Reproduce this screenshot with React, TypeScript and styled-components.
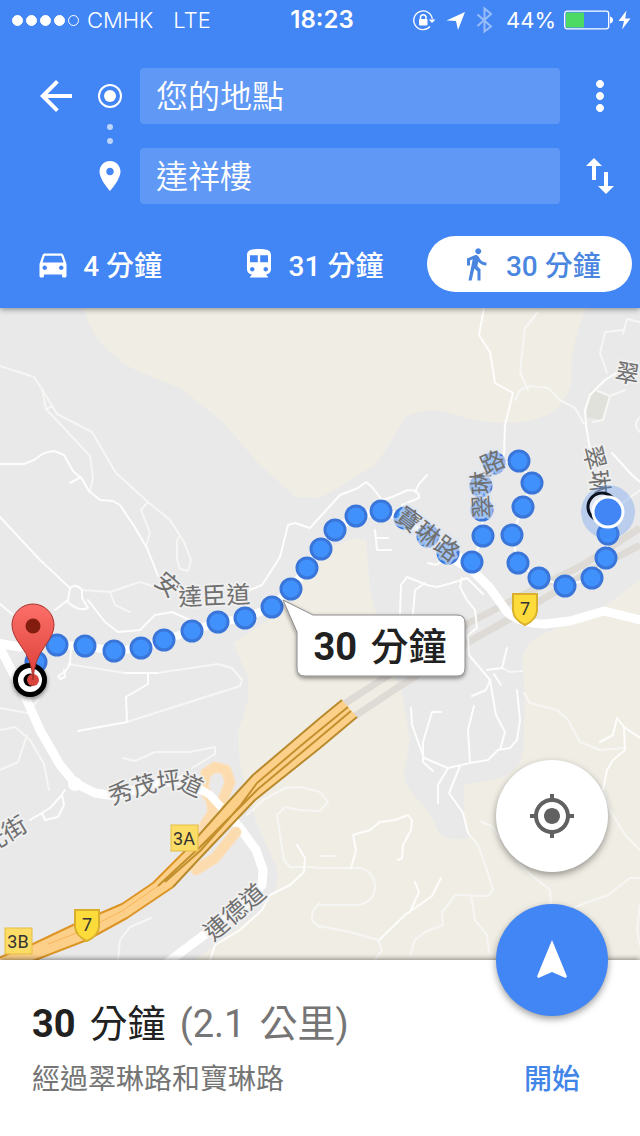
import React from 'react';
import styled, { createGlobalStyle, css } from 'styled-components';

const GlobalStyle = createGlobalStyle`
  *, *::before, *::after { box-sizing: border-box; }
  body {
    margin: 0;
    background: #fff;
    font-family: Roboto, 'Noto Sans CJK TC', sans-serif;
  }
  button, input { font-family: inherit; }
`;

const Page = styled.div`
  display: flex;
  flex-direction: column;
  min-height: 100vh;
`;

const Header = styled.header`
  position: relative;
  z-index: 2;
  background: #4285f4;
  color: #fff;
  box-shadow: 0 1px 6px rgba(0, 0, 0, 0.45);
`;

const StatusBar = styled.div`
  display: grid;
  grid-template-columns: 1fr auto 1fr;
  align-items: center;
  height: 40px;
  padding: 0 8px 0 12px;
  font-family: Inter, sans-serif;
  font-size: 22px;
  line-height: 40px;
`;

const Carrier = styled.div`
  display: flex;
  align-items: center;
  gap: 20px;
  font-weight: 300;
`;

const Signal = styled.span`
  display: flex;
  gap: 3px;
  margin-right: -12px;
`;

const SignalDot = styled.span<{ $on: boolean }>`
  width: 11px;
  height: 11px;
  border: 1px solid #fff;
  border-radius: 50%;
  background: ${p => (p.$on ? '#fff' : 'transparent')};
`;

const Clock = styled.time`
  font-size: 24px;
  font-weight: 600;
`;

const Indicators = styled.div`
  display: flex;
  align-items: center;
  justify-content: flex-end;
  gap: 8px;
  svg { display: block; flex: none; }
`;

const Power = styled.span`
  display: flex;
  align-items: center;
  gap: 4px;
`;

const RouteForm = styled.form`
  display: grid;
  grid-template-columns: 48px 36px 1fr 52px;
  grid-template-rows: 56px 24px 56px;
  column-gap: 12px;
  align-items: center;
  margin: 0;
  padding: 28px 16px 32px 32px;
`;

const IconButton = styled.button<{ $column: number; $row: number }>`
  grid-column: ${p => p.$column};
  grid-row: ${p => p.$row};
  justify-self: end;
  width: 48px;
  height: 48px;
  padding: 0;
  border: 0;
  background: none;
  color: #fff;
  svg { display: block; }
`;

const Marker = styled.span<{ $row: number }>`
  grid-column: 2;
  grid-row: ${p => p.$row};
  svg { display: block; }
`;

const Trail = styled.span`
  grid-column: 2;
  grid-row: 2;
  display: flex;
  flex-direction: column;
  align-items: center;
  gap: 8px;
  padding-bottom: 4px;
  &::before, &::after {
    content: '';
    width: 6px;
    height: 6px;
    border-radius: 50%;
    background: rgba(255, 255, 255, 0.65);
  }
`;

const PlaceInput = styled.input<{ $row: number }>`
  grid-column: 3;
  grid-row: ${p => p.$row};
  width: 100%;
  height: 56px;
  padding: 0 16px 5px;
  border: 0;
  border-radius: 4px;
  outline: none;
  background: rgba(255, 255, 255, 0.16);
  color: #fff;
  font-size: 32px;
  font-weight: 350;
`;

const Modes = styled.nav`
  display: grid;
  grid-template-columns: repeat(3, 1fr);
  gap: 8px;
  padding: 0 8px 16px 0;
`;

const Mode = styled.button<{ $active?: boolean }>`
  display: flex;
  align-items: center;
  justify-content: center;
  gap: 12px;
  height: 56px;
  padding: 0 8px 0 0;
  border: 0;
  border-radius: 28px;
  background: none;
  color: #fff;
  font-size: 28px;
  font-weight: 500;
  white-space: nowrap;
  svg { display: block; }
  ${p =>
    p.$active &&
    css`
      padding: 0;
      background: #fff;
      color: #4a86e0;
    `}
`;

const MapArea = styled.main`
  position: relative;
  flex: 1 1 0;
  min-height: 400px;
  background: #e9e9e9;
`;

const MapDrawing = styled.svg`
  position: absolute;
  inset: 0;
  width: 100%;
  height: 100%;
`;

const FabStack = styled.div`
  position: absolute;
  right: 32px;
  bottom: -56px;
  z-index: 3;
  display: flex;
  flex-direction: column;
  gap: 32px;
`;

const Fab = styled.button<{ $primary?: boolean }>`
  display: flex;
  align-items: center;
  justify-content: center;
  width: 112px;
  height: 112px;
  padding: 0;
  border: 0;
  border-radius: 50%;
  background: ${p => (p.$primary ? '#4285f4' : '#fff')};
  color: ${p => (p.$primary ? '#fff' : '#616161')};
  box-shadow: 0 3px 7px rgba(0, 0, 0, 0.38);
`;

const Summary = styled.section`
  position: relative;
  display: flex;
  align-items: flex-end;
  justify-content: space-between;
  padding: 32px;
  background: #fff;
  box-shadow: 0 -1px 5px rgba(0, 0, 0, 0.45);
`;

const Title = styled.h1`
  display: flex;
  gap: 14px;
  margin: 0;
  color: #212121;
  font-size: 38px;
  font-weight: 400;
  line-height: 64px;
  b { font-weight: 700; }
`;

const Distance = styled.span`
  display: flex;
  gap: 14px;
  color: #757575;
`;

const Via = styled.p`
  margin: 0;
  color: #757575;
  font-size: 28px;
  line-height: 48px;
`;

const StartButton = styled.button`
  width: 112px;
  height: 48px;
  padding: 0;
  border: 0;
  background: none;
  color: #4285e8;
  font-size: 28px;
  font-weight: 500;
  line-height: 48px;
`;

const RoadLabel = styled.text`
  fill: #707070;
  stroke: #f1f1f1;
  stroke-width: 4px;
  stroke-opacity: 0.85;
  stroke-linejoin: round;
  paint-order: stroke;
  font-size: 24px;
`;

const RouteLabel = styled(RoadLabel)`
  stroke: #dfe6f2;
  stroke-width: 5px;
  stroke-opacity: 0.6;
`;

const TagText = styled.text`
  fill: #333;
  font-size: 18px;
  text-anchor: middle;
`;

const CalloutText = styled.text`
  fill: #212121;
  font-size: 38px;
  font-weight: 700;
  text-anchor: middle;
`;

type IconProps = { d: string; size: number };

const Icon = ({ d, size }: IconProps) => (
  <svg width={size} height={size} viewBox="0 0 24 24" fill="currentColor" aria-hidden="true">
    <path d={d} />
  </svg>
);

const icons = {
  back: 'M20 11H7.83l5.59-5.59L12 4l-8 8 8 8 1.41-1.41L7.83 13H20v-2z',
  more: 'M12 8c1.1 0 2-.9 2-2s-.9-2-2-2-2 .9-2 2 .9 2 2 2zm0 2c-1.1 0-2 .9-2 2s.9 2 2 2 2-.9 2-2-.9-2-2-2zm0 6c-1.1 0-2 .9-2 2s.9 2 2 2 2-.9 2-2-.9-2-2-2z',
  swap: 'M16 17.01V10h-2v7.01h-3L15 21l4-3.99h-3zM9 3L5 6.99h3V14h2V6.99h3L9 3z',
  place: 'M12 2C8.13 2 5 5.13 5 9c0 5.25 7 13 7 13s7-7.75 7-13c0-3.87-3.13-7-7-7zm0 9.5c-1.38 0-2.5-1.12-2.5-2.5s1.12-2.5 2.5-2.5 2.5 1.12 2.5 2.5-1.12 2.5-2.5 2.5z',
  car: 'M18.92 6.01C18.72 5.42 18.16 5 17.5 5h-11c-.66 0-1.21.42-1.42 1.01L3 12v8c0 .55.45 1 1 1h1c.55 0 1-.45 1-1v-1h12v1c0 .55.45 1 1 1h1c.55 0 1-.45 1-1v-8l-2.08-5.99zM6.5 16c-.83 0-1.5-.67-1.5-1.5S5.67 13 6.5 13s1.5.67 1.5 1.5S7.33 16 6.5 16zm11 0c-.83 0-1.5-.67-1.5-1.5s.67-1.5 1.5-1.5 1.5.67 1.5 1.5-.67 1.5-1.5 1.5zM5 11l1.5-4.5h11L19 11H5z',
  train: 'M12 2c-4.42 0-8 .5-8 4v9.5C4 17.43 5.57 19 7.5 19L6 20.5v.5h12v-.5L16.5 19c1.93 0 3.5-1.57 3.5-3.5V6c0-3.5-3.58-4-8-4zM7.5 17c-.83 0-1.5-.67-1.5-1.5S6.67 14 7.500 14s1.500.67 1.500 1.500S8.330 17 7.500 17zm3.700-6.200H6V6.200h5.200v4.600zm5.300 6.200c-.83 0-1.500-.67-1.500-1.500s.67-1.500 1.500-1.500 1.500.67 1.500 1.500-.67 1.500-1.500 1.500zm1.500-6.200h-5.200V6.200H18v4.600z',
  walk: 'M13.500 5.500c1.100 0 2-.9 2-2s-.9-2-2-2-2 .9-2 2 .9 2 2 2zM9.800 8.900L7 23h2.100l1.800-8 2.100 2v6h2v-7.500l-2.100-2 .6-3C14.800 12 16.800 13 19 13v-2c-1.900 0-3.500-1-4.300-2.400l-1-1.600c-.4-.6-1-1-1.700-1-.3 0-.5.1-.8.1L6 8.300V13h2V9.600l1.800-.7',
  locate: 'M12 8c-2.21 0-4 1.79-4 4s1.79 4 4 4 4-1.79 4-4-1.79-4-4-4zm8.94 3c-.46-4.17-3.77-7.48-7.94-7.94V1h-2v2.06C6.83 3.52 3.52 6.83 3.06 11H1v2h2.06c.46 4.17 3.77 7.48 7.94 7.94V23h2v-2.06c4.17-.46 7.48-3.77 7.94-7.94H23v-2h-2.06zM12 19c-3.87 0-7-3.13-7-7s3.13-7 7-7 7 3.13 7 7-3.13 7-7 7z',
  navigate: 'M12 2L4.5 20.29l.71.71L12 18l6.79 3 .71-.71z',
};

const OpenGround = () => (
  <g fill="#f0ede4">
    <path d="M83 300 L86 315 Q92 335 105 347 Q125 368 150 376 L180 388 L222 421 L260 465 L296 497 L320 498 L375 465 Q390 445 405 417 Q430 405 455 415 Q485 424 515 423 Q540 421 555 410 Q575 390 571 370 Q573 335 590 300Z" />
    <path d="M283 610 L320 552 L355 538 L366 540 L370 590 L383 640 L402 693 L410 740 L404 775 Q406 790 422 804 Q432 815 440 835 Q452 842 469 838 L464 820 L464 785 L500 778 Q520 770 523 752 L525 700 L522 660 Q524 642 545 633 L600 610 L640 580 V960 H195 L217 943 L262 910 Q282 885 277 868 L256 822 L240 765 L238 733 L248 700 L248 677 L233 643Z" />
  </g>
);

const routeDots: [number, number][] = [
  [36, 662], [57, 645], [85, 646], [114, 651], [141, 648], [164, 640], [192, 631],
  [218, 622], [245, 618], [272, 607], [291, 589], [307, 568], [321, 549], [335, 530],
  [356, 516], [381, 511], [405, 518], [428, 536], [448, 553], [472, 562], [483, 536],
  [482, 510], [481, 486], [494, 463], [519, 461], [532, 483], [523, 507], [512, 535],
  [518, 563], [539, 578], [565, 586], [592, 578], [606, 558], [608, 534],
];

const Roads = () => (
  <g fill="none" strokeLinejoin="round" strokeLinecap="round">
    <g stroke="#dedbd6" strokeWidth="7" strokeLinecap="butt">
      <path d="M344 704 L395 671 L467 624 L507 603 L583 565 L640 528" />
      <path d="M355 716 L400 686 L472 640 L520 613 L587 573 L640 545" />
    </g>
    <path
      stroke="#f6f6f4"
      strokeWidth="2"
      d="M0 366 L34 377 L42 389 L57 414 L92 432 L116 473 L148 502 L170 520 L184 542 L191 560 L188 571 L180 569 L177 560 L177 540 L180 536 M42 389 L46 409 L90 456 L93 478 L90 491 M46 409 L53 406 M148 502 L141 510 L150 533 L146 546
      M538 312 L525 328 L520 372 L528 390 M515 400 L520 390 L530 386 L548 388 L560 400 L575 408 L584 424 M640 322 L627 319 L623 334 M623 330 L605 332 L600 353 L607 373 M610 396 L603 420 L593 422 M598 391 L610 396 L625 390 M640 417 Q634 422 637 429 L642 434 M640 490 L620 505
      M524 693 L530 703 L557 710 L568 720 L580 742 L600 750 L625 748 M481 822 L492 826 L505 845 L525 870 L550 890 L551 905 M575 907 L608 895 L630 878 L640 878 M603 790 L610 810 L625 835 L640 850 M640 905 L637 930 L640 945
      M468 833 L478 845 L487 870 L493 890 L488 896 L455 895 L448 905 L442 912 L443 925 L425 932 L415 940 L410 955 M471 895 L475 920 L487 935 L489 952
      M320 868 L360 868 Q375 872 375 887 Q375 900 360 905 L320 905 M320 856 H335 M320 926 L350 932 L378 940 L382 950 L375 960
      M247 815 L263 800 L285 788 L300 787 L320 792 L328 802 L320 811 L300 810 L285 807 L277 815 L284 860 L290 867 L310 867 L320 868 M320 903 Q311 910 312 920 L320 928
      M118 960 L120 940 L130 927 L151 918 M0 730 L15 727 L30 740 L44 764 L49 790 M27 735 L18 762 L0 770 M0 708 L27 713 L38 700
      M68 664 L125 673 M157 673 L218 664 L232 668 L242 680 L240 686 L127 722 M123 758 L135 761 L155 752 L190 752 L215 747 V754 L192 768 M82 590 L110 592 L140 582 L158 588 M110 592 L115 605 L130 612 M502 668 L510 672 L522 671"
    />
    <path
      stroke="#fdfdfc"
      strokeWidth="2"
      d="M0 464 H24 L34 460 L44 453 L54 451 L64 455 L73 471 L82 479 L89 491 L100 500 L113 501 L120 505 L134 526 L147 548 L158 576 M70 483 L81 477 M0 517 L40 560 L70 588 L68 600 L55 610 M70 588 Q76 583 82 590 V598 L88 608 Q78 612 68 602 M0 604 L12 614 M88 600 L105 622 L118 632 L140 630 L155 615 L172 612 L190 620
      M250 590 L262 585 L280 557 L288 525 L295 523 L310 528 L320 517 L340 495 L358 488 L366 482 L372 487 L382 500 L392 497 L408 490 Q420 490 419 498 L402 505 M415 492 L419 484 L427 475
      M484 308 L479 335 L490 352 L495 383 L513 393 L505 425 L504 455 M618 372 L605 380 L590 395 L585 410 L586 425 L590 450 M612 453 L632 475 L640 482 M375 530 L377 550 H391 M377 538 H388 M428 563 L436 565 L448 558
      M400 615 L401 585 L407 577 L427 585 L437 587 L452 583 L467 578 M412 625 L415 590 L425 583 M462 578 L460 587 L467 600 L475 610 L477 628 L468 635 L469 655 L480 668 L490 680 L496 715 L505 732 L500 750 M467 578 L477 588 L483 594 M487 670 L502 668 L507 648 M490 680 L486 690 L472 696 M494 674 L501 685 M517 690 L520 720 L517 740 L510 748 L498 750 L488 760 L470 763 L448 768 L424 758 L412 725 L411 708 M441 712 H432 L423 742 V762 L433 771 M474 706 L468 730 L470 762 M448 768 L438 785 V803 M460 766 L449 793 L463 813 L468 833
      M351 868 L356 850 L353 835 L370 830 L380 822 L395 820 L408 815 L412 820 L411 830 L403 845 L402 858 L398 860 M441 878 L432 896 L405 915 L379 940 M415 882 L419 892 L410 912
      M600 742 L613 735 L617 718 L624 727 L640 738 M624 727 L625 750 L613 760 L607 770 L603 790
      M297 845 L305 858 L304 872 L290 885 L270 895 L262 910 L240 930 L215 945 L210 960 M30 820 L50 808 L60 797 L65 790 M42 813 L45 820 L58 817 L64 805 L62 795
      M71 648 L70 664 L65 672 L58 676 L60 679 L65 677 L64 670 M125 673 H157 M148 673 V684 L126 697 L127 722 L78 731"
    />
    <polyline stroke="#fff" strokeWidth="8" points={routeDots.slice(1, 20).map(p => p.join(',')).join(' ')} />
    <polyline stroke="#fff" strokeWidth="2" points={routeDots.slice(19).map(p => p.join(',')).join(' ')} />
    <path stroke="#fff" strokeWidth="9" d="M455 560 L473 571 L490 588 L507 612 Q520 624 545 624 L570 621 L604 611 L640 620" />
    <path stroke="#fff" strokeWidth="9" d="M-4 643 L20 647 L57 640 M0 648 L24 694 L40 730 L60 765 L75 783 L95 793 L115 796 L150 785 L178 780 L205 792 L220 805 L240 828 L256 850 L263 870 L262 885 L245 905 L200 938 L168 962" />
    <circle cx="75" cy="784" r="7" fill="#fff" />
    <g stroke="#fbdfba">
      <path strokeWidth="11" d="M200 832 L213 812 L211 800 L203 788 L206 773 L215 767 L226 770 L230 782 L222 802 M236 832 L215 858 L196 870" />
      <path stroke="#fcdcae" strokeWidth="8" d="M204 826 L213 812 L211 800 L203 788 L206 773 L215 767 L226 770 L230 782 L222 802 M236 832 L215 858 L196 870" />
    </g>
    <path stroke="#fff" strokeWidth="8" strokeLinecap="butt" d="M200 789 L210 795 L221 807" />
    <path fill="#fdd08a" d="M-4 959 L33 944 L73 925 L122 904 L153 883 L183 853 L230 800 L253 775 L320 718 L342 700 L357 717 L320 748 L255 800 L200 858 L173 887 L127 918 L87 940 L30 962 H-4Z" />
    <g strokeWidth="2" strokeLinecap="butt">
      <path stroke="#dc9424" d="M-4 959 L33 944 L73 925 L122 904 L153 883 L183 853 M173 887 L127 918 L87 940 L30 962" />
      <path stroke="#b98a2c" d="M183 853 L230 800 L253 775 L320 718 L342 700 M357 717 L320 748 L255 800 L200 858 L173 887" />
      <path stroke="#c3902d" d="M348 707 L304 743 L257 783 L240 806 L200 851 L165 882 M351 711 L307 748 L258 789 L200 847 L158 886" />
      <path stroke="#f8b55a" strokeWidth="1" d="M158 886 L122 911 L87 929 L48 944" />
    </g>
  </g>
);

const Shield = ({ x, y }: { x: number; y: number }) => (
  <g transform={`translate(${x} ${y})`}>
    <path d="M-12 -15 H12 V2 Q11 11 0 16 Q-11 11 -12 2Z" fill="#fddb3a" stroke="#d8b02e" strokeWidth="2" />
    <TagText y="6">7</TagText>
  </g>
);

const ExitTag = ({ x, y, name }: { x: number; y: number; name: string }) => (
  <g transform={`translate(${x} ${y})`}>
    <rect x="-13" y="-13" width="27" height="26" fill="#fbdc67" stroke="#e6bd45" />
    <TagText y="7">{name}</TagText>
  </g>
);

const labels = [
  { id: 'anderson', text: '安達臣道', d: 'M153 583 L169 597 M176 606 L262 602' },
  { id: 'saumauping', text: '秀茂坪道', d: 'M112 805 L135 797 L156 791 L180 788 M175 787 L202 799' },
  { id: 'linetak', text: '連德道', d: 'M213 942 L285 880' },
  { id: 'hiukwong', text: '光街', d: 'M-12 854 L45 820' },
  { id: 'tsuilam-east', text: '翠琳', d: 'M583 448 L590 475 L594 510' },
  { id: 'tsuilam-north', text: '翠', d: 'M614 380 L644 385' },
];

const routeLabels = [
  { id: 'polam', text: '寶琳路', d: 'M394 519 L465 573' },
  { id: 'tsuilam', text: '翠琳路', d: 'M492 518 L489 470 M485 475 L516 461' },
];

const MapView = () => (
  <MapDrawing viewBox="0 308 640 652" preserveAspectRatio="xMidYMid slice" role="img" aria-label="步行路線地圖">
    <defs>
      {[...labels, ...routeLabels].map(l => (
        <path key={l.id} id={l.id} d={l.d} />
      ))}
      <linearGradient id="pin" x1="0" y1="0" x2="0" y2="1">
        <stop offset="0" stopColor="#fb6f68" />
        <stop offset="1" stopColor="#dc3f38" />
      </linearGradient>
      <filter id="lift" x="-20%" y="-20%" width="140%" height="150%">
        <feDropShadow dx="0" dy="2" stdDeviation="2" floodOpacity="0.45" />
      </filter>
    </defs>

    <OpenGround />
    <path d="M591 390 L609 396 L602 420 L586 417Z" fill="#e1e1db" />
    <Roads />

    {labels.map(l => (
      <RoadLabel key={l.id}>
        <textPath href={`#${l.id}`}>{l.text}</textPath>
      </RoadLabel>
    ))}

    <g fill="#4091fc" stroke="#3a76da" strokeWidth="3">
      {routeDots.map(([x, y]) => (
        <circle key={`${x}-${y}`} cx={x} cy={y} r="10" />
      ))}
    </g>

    {routeLabels.map(l => (
      <RouteLabel key={l.id}>
        <textPath href={`#${l.id}`}>{l.text}</textPath>
      </RouteLabel>
    ))}

    <Shield x={525} y={609} />
    <Shield x={87} y={925} />
    <ExitTag x={184} y={838} name="3A" />
    <ExitTag x={18} y={941} name="3B" />

    <circle cx="608" cy="512" r="27" fill="#4285f4" opacity="0.28" />
    <circle cx="602" cy="507" r="14" fill="#dfe7f5" stroke="#0c1220" strokeWidth="3" />
    <circle cx="608" cy="512" r="15" fill="#4285f4" stroke="#fff" strokeWidth="3" />

    <g filter="url(#lift)">
      <circle cx="30" cy="680" r="14.500" fill="#fff" stroke="#000" strokeWidth="5" />
    </g>
    <circle cx="30" cy="680" r="6.500" fill="#000" />
    <circle cx="33" cy="680" r="6" fill="#d8443e" />
    <path d="M33 680 Q32 660 21 646 Q12 634 12 625 A21 21 0 0 1 54 625 Q54 634 45 646 Q34 660 33 680Z" fill="url(#pin)" stroke="#a8322c" />
    <circle cx="33" cy="626" r="7.500" fill="#821d10" />

    <path
      filter="url(#lift)"
      d="M283 600 L313 615 H457 Q465 615 465 623 V668 Q465 676 457 676 H305 Q297 676 297 668 V632Z"
      fill="#fff"
      stroke="#8b8b8b"
      strokeWidth="1"
    />
    <CalloutText x="380" y="660">
      30 <tspan dx="4" fontWeight="500">分鐘</tspan>
    </CalloutText>
  </MapDrawing>
);

const StatusIcons = () => (
  <Indicators>
    <svg width="26" height="24" viewBox="0 0 26 24" fill="none" stroke="#fff" aria-hidden="true">
      <path d="M18 18.500 A9.300 9.300 0 1 1 20.300 11" strokeWidth="1.300" />
      <path d="M16.800 11.500 H23.500 L20 15Z" fill="#fff" stroke="none" />
      <rect x="7" y="11" width="8.500" height="6.500" rx="1" fill="#fff" stroke="none" />
      <path d="M8.500 11 V9 A2.800 2.800 0 0 1 14 9 V11" strokeWidth="1.500" />
    </svg>
    <svg width="20" height="24" viewBox="0 0 20 24" fill="#fff" aria-hidden="true">
      <path d="M19 4 L0.500 12.500 L10 13 L12 22Z" />
    </svg>
    <svg width="24" height="28" viewBox="0 0 24 28" fill="none" stroke="#fff" strokeWidth="2" opacity="0.45" aria-hidden="true">
      <path d="M3.500 8.500 L17 20.500 L10.500 25.500 V2.500 L17 8 L3.500 20" />
    </svg>
    <span>44%</span>
    <Power>
      <svg width="50" height="20" viewBox="0 0 50 20" aria-hidden="true">
        <rect x="0.700" y="1.200" width="44" height="17.600" rx="2.500" fill="none" stroke="#fff" strokeWidth="1.300" />
        <rect x="2" y="2.500" width="18" height="15" rx="1" fill="#4cd964" />
        <path d="M46 6.500 Q49 7.500 49 10 Q49 12.500 46 13.500Z" fill="#fff" />
      </svg>
      <svg width="14" height="20" viewBox="0 0 14 20" fill="#fff" aria-hidden="true">
        <path d="M8.500 0.500 L0.500 11 H6 L4 19.500 L12.500 8.500 H7.200Z" />
      </svg>
    </Power>
  </Indicators>
);

export default function App() {
  return (
    <>
      <GlobalStyle />
      <Page>
        <Header>
          <StatusBar>
            <Carrier>
              <Signal aria-hidden="true">
                {[true, true, true, true, false].map((on, i) => (
                  <SignalDot key={i} $on={on} />
                ))}
              </Signal>
              <span>CMHK</span>
              <span>LTE</span>
            </Carrier>
            <Clock>18:23</Clock>
            <StatusIcons />
          </StatusBar>

          <RouteForm onSubmit={e => e.preventDefault()}>
            <IconButton type="button" $column={1} $row={1} aria-label="返回">
              <Icon d={icons.back} size={48} />
            </IconButton>
            <Marker $row={1}>
              <svg width="36" height="36" viewBox="0 0 36 36" aria-hidden="true">
                <circle cx="18" cy="18" r="11" fill="none" stroke="#fff" strokeWidth="2" />
                <circle cx="18" cy="18" r="6" fill="#fff" />
              </svg>
            </Marker>
            <PlaceInput $row={1} aria-label="起點" defaultValue="您的地點" />
            <IconButton type="button" $column={4} $row={1} aria-label="更多選項">
              <Icon d={icons.more} size={48} />
            </IconButton>
            <Trail />
            <Marker $row={3}>
              <Icon d={icons.place} size={36} />
            </Marker>
            <PlaceInput $row={3} aria-label="目的地" defaultValue="達祥樓" />
            <IconButton type="button" $column={4} $row={3} aria-label="對調起點和目的地">
              <Icon d={icons.swap} size={48} />
            </IconButton>
          </RouteForm>

          <Modes>
            <Mode type="button">
              <Icon d={icons.car} size={36} />
              <span>4 分鐘</span>
            </Mode>
            <Mode type="button">
              <Icon d={icons.train} size={36} />
              <span>31 分鐘</span>
            </Mode>
            <Mode type="button" $active aria-pressed="true">
              <Icon d={icons.walk} size={36} />
              <span>30 分鐘</span>
            </Mode>
          </Modes>
        </Header>

        <MapArea>
          <MapView />
          <FabStack>
            <Fab type="button" aria-label="我的位置">
              <Icon d={icons.locate} size={48} />
            </Fab>
            <Fab type="button" $primary aria-label="導航">
              <Icon d={icons.navigate} size={48} />
            </Fab>
          </FabStack>
        </MapArea>

        <Summary>
          <div>
            <Title>
              <b>30</b>
              <span>分鐘</span>
              <Distance>
                <span>(2.1</span>
                <span>公里)</span>
              </Distance>
            </Title>
            <Via>經過翠琳路和寶琳路</Via>
          </div>
          <StartButton type="button">開始</StartButton>
        </Summary>
      </Page>
    </>
  );
}
